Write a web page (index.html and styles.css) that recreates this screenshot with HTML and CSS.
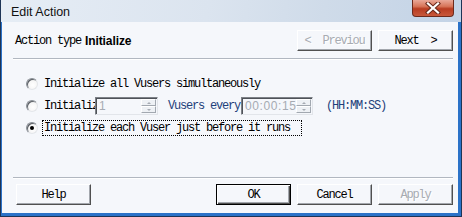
FILE: index.html
```html
<!DOCTYPE html>
<html>
<head>
<meta charset="utf-8">
<title>Edit Action</title>
<link rel="stylesheet" href="styles.css">
</head>
<body>
<div class="window">
  <div class="titlebar">
    <span class="title">Edit Action</span>
    <span class="close">
      <svg width="16" height="12" viewBox="0 0 16 12">
        <path d="M3 1.5 L13 10.5 M13 1.5 L3 10.5" stroke="#6a2a1c" stroke-width="4.2" stroke-linecap="square"/>
        <path d="M3 1.5 L13 10.5 M13 1.5 L3 10.5" stroke="#ffffff" stroke-width="2.2" stroke-linecap="square"/>
      </svg>
    </span>
  </div>
  <div class="client">
    <div class="header">
      <div class="atype"><span class="mono">Action type</span><b class="atname">Initialize</b></div>
      <div class="nav">
        <button class="btn disabled">&lt;  Previou</button>
        <button class="btn">Next  &gt;</button>
      </div>
    </div>
    <div class="sep"></div>
    <div class="options">
      <div class="row">
        <span class="radio"></span><span class="lbl">Initialize all Vusers simultaneously</span>
      </div>
      <div class="row">
        <span class="radio"></span><span class="lbl clip">Initialize</span>
        <span class="spin s1"><span class="val">1</span><span class="arrows"><span class="up"></span><span class="dn"></span></span></span>
        <span class="lbl blue every">Vusers every</span>
        <span class="spin s2"><span class="val">00:00:15</span><span class="arrows"><span class="up"></span><span class="dn"></span></span></span>
        <span class="lbl blue fmt">(HH:MM:SS)</span>
      </div>
      <div class="row">
        <span class="radio on"></span><span class="lbl focus">Initialize each Vuser just before it runs</span>
      </div>
    </div>
    <div class="sep"></div>
    <div class="footer">
      <button class="btn">Help</button>
      <div class="actions">
        <button class="btn default">OK</button>
        <button class="btn">Cancel</button>
        <button class="btn disabled">Apply</button>
      </div>
    </div>
  </div>
</div>
</body>
</html>
```

FILE: styles.css
```css
html, body {
  margin: 0;
  padding: 0;
  background: #ffffff;
}

.window {
  box-sizing: border-box;
  width: 462px;
  height: 217px;
  display: flex;
  flex-direction: column;
  background: #2b72c8;
  border: 1px solid #1d3456;
  border-top: none;
}

.titlebar {
  height: 22px;
  flex: none;
  display: flex;
  justify-content: space-between;
  align-items: flex-start;
  padding: 0 7px 0 10px;
  background: linear-gradient(100deg, #e6edf5 0%, #dbe4ef 45%, #cfdbe9 70%, #c3d3e6 100%);
}

.title {
  font-family: "Liberation Sans", Arial, sans-serif;
  font-size: 12.5px;
  line-height: 15px;
  padding-top: 5px;
  color: #111;
}

.close {
  box-sizing: border-box;
  width: 42px;
  height: 17px;
  display: flex;
  align-items: center;
  justify-content: center;
  border: 1px solid #6d2a1c;
  border-top: none;
  border-radius: 0 0 4px 4px;
  background: linear-gradient(to bottom, #e9a898 0%, #d77559 40%, #b83c21 55%, #c8583b 100%);
}

.client {
  flex: 1;
  margin: 0 3px 3px 1px;
  background: #f5f7fb;
  display: flex;
  flex-direction: column;
  font-family: "Liberation Mono", "Courier New", monospace;
  font-size: 12px;
  letter-spacing: -1.2px;
  color: #000;
}

.header {
  display: flex;
  justify-content: space-between;
  align-items: center;
  padding: 8px 5px 0 13px;
}

.atype {
  display: flex;
  align-items: center;
}

.atname {
  margin-left: 4px;
  font-family: "Liberation Sans", Arial, sans-serif;
  font-size: 12px;
  letter-spacing: -0.1px;
  font-weight: bold;
}

.nav, .actions {
  display: flex;
  gap: 6px;
}

.btn {
  box-sizing: border-box;
  width: 75px;
  height: 21px;
  padding: 0;
  margin: 0;
  display: flex;
  align-items: center;
  justify-content: center;
  background: #f5f7fb;
  border: 1px solid;
  border-color: #ffffff #505050 #505050 #ffffff;
  box-shadow: inset -1px -1px #a3a7ad;
  font-family: "Liberation Mono", "Courier New", monospace;
  font-size: 12px;
  letter-spacing: -1.2px;
  color: #000;
  white-space: pre;
  overflow: hidden;
}

.btn.default {
  border-color: #000;
  box-shadow: inset 1px 1px #fff, inset -1px -1px #505050, inset -2px -2px #a3a7ad;
}

.btn.disabled {
  color: #a7abb2;
  text-shadow: 1px 1px #ffffff;
}

.sep {
  height: 0;
  border-top: 1px solid #b1b7c0;
  border-bottom: 1px solid #ffffff;
  margin: 7px 5px 0 11px;
}

.options {
  flex: 1;
  padding: 13px 0 0 24px;
}

.row {
  height: 22px;
  display: flex;
  align-items: center;
}

.radio {
  box-sizing: border-box;
  width: 12px;
  height: 12px;
  flex: none;
  margin-right: 6px;
  border-radius: 50%;
  border: 1px solid;
  border-color: #8a8f96 #e4e6ea #e4e6ea #8a8f96;
  box-shadow: inset 1px 1px #5a5e64;
  background: radial-gradient(circle at 60% 60%, #ffffff 0%, #f4f4f4 60%, #e6e6e6 100%);
  display: flex;
  align-items: center;
  justify-content: center;
}

.radio.on::after {
  content: "";
  width: 4px;
  height: 4px;
  border-radius: 50%;
  background: #000;
}

.lbl {
  white-space: pre;
  line-height: 14px;
}

.clip {
  width: 51px;
  overflow: hidden;
  flex: none;
}

.blue {
  color: #1f3f7a;
}

.every {
  margin-left: 10px;
}

.fmt {
  margin-left: 13px;
}

.focus {
  margin-left: -2px;
  padding: 0 11px 0 1px;
  border: 1px dotted #000;
}

.spin {
  box-sizing: border-box;
  height: 18px;
  display: flex;
  flex: none;
  border: 1px solid;
  border-color: #7d8187 #e2e5ea #e2e5ea #7d8187;
  box-shadow: inset 1px 1px #4e5258;
  background: #f5f7fb;
}

.s1 { width: 63px; }
.s2 { width: 72px; margin-left: 1px; }

.val {
  flex: 1;
  padding: 1px 0 0 3px;
  font-family: "Liberation Sans", Arial, sans-serif;
  font-size: 12px;
  letter-spacing: 0.6px;
  line-height: 15px;
  color: #a6abb3;
  overflow: hidden;
}

.arrows {
  width: 16px;
  display: flex;
  flex-direction: column;
  padding: 1px 1px 1px 0;
  box-sizing: border-box;
}

.arrows span {
  flex: 1;
  border: 1px solid;
  border-color: #ffffff #a2a8b0 #a2a8b0 #ffffff;
  background: #eef1f5;
  display: flex;
  align-items: center;
  justify-content: center;
}

.arrows .up::after {
  content: "";
  border-left: 2px solid transparent;
  border-right: 2px solid transparent;
  border-bottom: 2px solid #a6abb3;
}

.arrows .dn::after {
  content: "";
  border-left: 2px solid transparent;
  border-right: 2px solid transparent;
  border-top: 2px solid #a6abb3;
}

.footer {
  display: flex;
  justify-content: space-between;
  padding: 5px 5px 8px 14px;
}
```
